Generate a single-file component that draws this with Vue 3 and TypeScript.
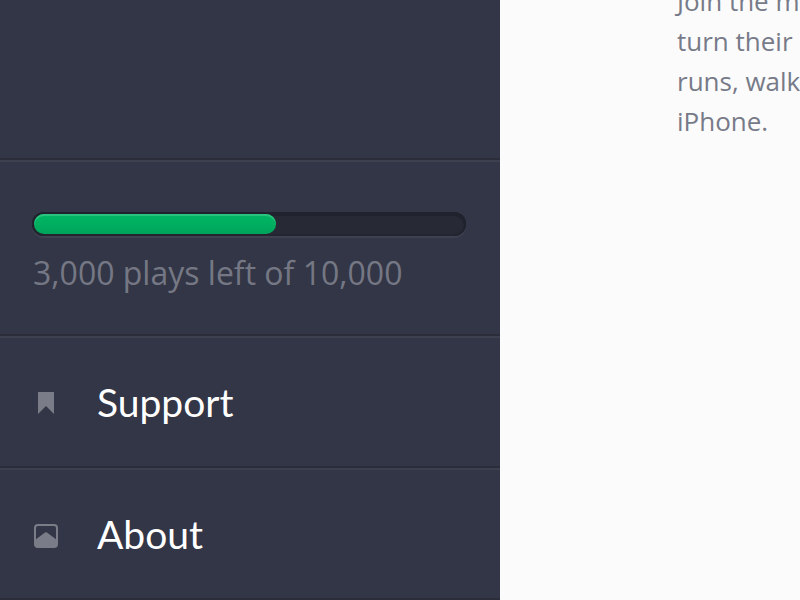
<script setup lang="ts">
interface MenuItem {
  label: string
  icon: 'bookmark' | 'picture'
}

const items: MenuItem[] = [
  { label: 'Support', icon: 'bookmark' },
  { label: 'About', icon: 'picture' },
]
const fillPercent = 56.3
const introLines: string[] = ['Join the m', 'turn their', 'runs, walk', 'iPhone.']
</script>

<template>
  <div class="page">
    <aside class="sidebar">
      <div class="blank"></div>
      <section class="usage">
        <div
          class="track"
          role="progressbar"
          aria-labelledby="usage-label"
          :aria-valuenow="fillPercent"
          aria-valuemin="0"
          aria-valuemax="100"
        >
          <div class="fill" :style="{ width: fillPercent + '%' }"></div>
        </div>
        <p id="usage-label" class="usage-label">3,000 plays left of 10,000</p>
      </section>
      <nav>
        <a v-for="item in items" :key="item.label" class="item" href="#">
          <svg class="icon" viewBox="0 0 24 24" aria-hidden="true">
            <path v-if="item.icon === 'bookmark'" d="M4 0h16v22l-8-8-8 8z" />
            <path
              v-else
              fill-rule="evenodd"
              d="M4 0h16a4 4 0 0 1 4 4v16a4 4 0 0 1-4 4H4a4 4 0 0 1-4-4V4a4 4 0 0 1 4-4zM4 2a2 2 0 0 0-2 2v11.300l9-6.700q1-.7 2 0l9 6.700V4a2 2 0 0 0-2-2z"
            />
          </svg>
          <span class="item-label">{{ item.label }}</span>
        </a>
      </nav>
    </aside>
    <main class="content">
      <p class="intro">
        <template v-for="(line, i) in introLines" :key="i">{{ line }}<br /></template>
      </p>
    </main>
  </div>
</template>

<style>
body {
  margin: 0;
  background: #fbfbfb;
}
</style>

<style scoped>
.page {
  display: grid;
  grid-template-columns: minmax(0, 5fr) minmax(0, 3fr);
  min-height: 100vh;
  overflow: hidden;
  font-family: "Open Sans", "Noto Sans", sans-serif;
}
.sidebar {
  background: #333646;
}
.blank {
  height: 158px;
  border-bottom: 2px solid #2b2d3a;
}
.usage {
  padding: 50px 34px 39px 32px;
  border-top: 2px solid #3d404f;
  border-bottom: 2px solid #2b2d3a;
}
.track {
  padding: 2px;
  border-radius: 12px;
  background: #272a35;
  box-shadow: inset 0 2px 0 2px #20222d, inset 0 0 0 2px #232530, 0 2px 0 #3e4150;
}
.fill {
  height: 20px;
  border-radius: 10px;
  background: linear-gradient(#00b865, #00a45a);
  box-shadow: inset 0 2px 0 #2bc47f;
}
.usage-label {
  margin: 15px 0 0 1px;
  font-size: 32px;
  line-height: 44px;
  white-space: nowrap;
  color: #757884;
}
.item {
  display: flex;
  align-items: center;
  gap: 39px;
  height: 124px;
  padding: 4px 0 0 34px;
  border-top: 2px solid #3d404f;
  border-bottom: 2px solid #2b2d3a;
  font-family: Lato, sans-serif;
  font-size: 39px;
  line-height: 48px;
  color: #fff;
  text-decoration: none;
}
.item-label {
  padding-bottom: 4px;
}
.icon {
  flex: none;
  width: 24px;
  height: 24px;
  fill: #7a7d88;
}
.content {
  padding-left: 177px;
  background: #fbfbfb;
}
.intro {
  margin: -19px 0 0;
  font-size: 26px;
  line-height: 40px;
  white-space: nowrap;
  color: #777a88;
}
</style>
